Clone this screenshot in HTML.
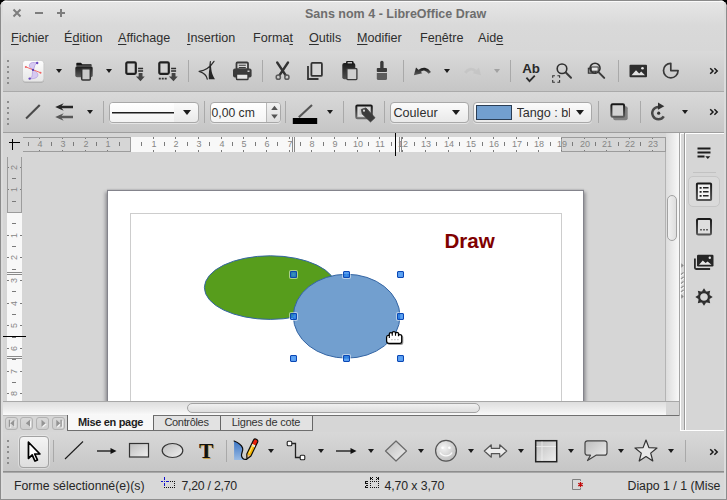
<!DOCTYPE html>
<html><head><meta charset="utf-8"><title>Sans nom 4 - LibreOffice Draw</title>
<style>
html,body{margin:0;padding:0;background:#000;}
body{width:727px;height:500px;position:relative;overflow:hidden;font-family:"Liberation Sans",sans-serif;font-size:13px;color:#333;}
.a{position:absolute}
#win{left:0;top:0;width:727px;height:500px;background:#d6d6d6;border-radius:8px 8px 0 0;overflow:hidden}
#title{left:0;top:0;width:727px;height:51px;background:linear-gradient(#e9e9e9 0,#e5e5e5 3px,#d9d9d9 26px,#d7d7d7 51px)}
#ttext{left:305px;top:7px;white-space:nowrap;font-weight:bold;font-size:12.5px;color:#6e6e6e}
.mi{top:31px;font-size:12.6px;color:#2e2e2e;white-space:nowrap}
.mi u{text-decoration:underline;text-underline-offset:2px}
#tb1{left:3px;top:51px;width:721px;height:40px;background:linear-gradient(#d9d9d9,#c6c6c6)}
#tb2{left:3px;top:92px;width:721px;height:40px;background:linear-gradient(#d9d9d9,#c6c6c6)}
.hl{height:1px;left:0;width:727px}
.dot{width:2px;height:2px;background:#8c8c8c;left:7px}
.sep{width:1px;background:#a9a9a9}
.dd{width:0;height:0;border-left:3.5px solid transparent;border-right:3.5px solid transparent;border-top:4px solid #1c1c1c}
#work{left:3px;top:133px;width:663px;height:268px;background:#d6d6d6;overflow:hidden}
.rn{font-size:9px;color:#868686;top:139px;width:20px;text-align:center;line-height:11px}
.vn{font-size:9px;color:#868686;left:4px;width:20px;height:11px;text-align:center;line-height:11px;transform:rotate(-90deg)}
.tk{background:#7a7a7a}
.hd{width:7px;height:7px;border-radius:1px;background:radial-gradient(circle,rgba(48,145,246,.78) 0,rgba(22,115,230,.7) 70%,rgba(14,95,210,.75) 100%);border:1px solid #0a48b6;box-shadow:0 0 0 1px rgba(255,255,255,.5);box-sizing:border-box}
.tab{top:416px;height:14px;font-size:11px;letter-spacing:-.33px;line-height:13px;text-align:center;white-space:nowrap;box-sizing:border-box}
.st{top:479px;font-size:12.300px;color:#262626;white-space:nowrap}
</style></head><body>
<div id="win" class="a">

<!-- title + menu -->
<div id="title" class="a"></div>
<div class="a hl" style="top:0;background:#8a8a8a"></div>
<div class="a hl" style="top:1px;background:#fafafa"></div>
<div id="ttext" class="a"><span id="tspan">Sans nom 4 - LibreOffice Draw</span></div>


<!-- window buttons -->
<svg class="a" style="left:12px;top:8px" width="56" height="10" viewBox="0 0 56 10"><g stroke="#7d7d7d" stroke-width="2" fill="none"><path d="M1.5 1.5l7 7M8.5 1.5l-7 7"/><path d="M23 5h8"/><path d="M45 5h8M49 1v8"/></g></svg>
<!-- menu -->
<div class="a mi" id="m1" style="left:11px"><u>F</u>ichier</div>
<div class="a mi" id="m2" style="left:64px">É<u>d</u>ition</div>
<div class="a mi" id="m3" style="left:118px"><u>A</u>ffichage</div>
<div class="a mi" id="m4" style="left:187px"><u>I</u>nsertion</div>
<div class="a mi" id="m5" style="left:253px">Forma<u>t</u></div>
<div class="a mi" id="m6" style="left:309px"><u>O</u>utils</div>
<div class="a mi" id="m7" style="left:357px"><u>M</u>odifier</div>
<div class="a mi" id="m8" style="left:420px">Fe<u>n</u>être</div>
<div class="a mi" id="m9" style="left:478px">Aid<u>e</u></div>

<!-- toolbars -->
<div id="tb1" class="a"></div>
<div class="a hl" style="top:91px;background:#aaa"></div>
<div id="tb2" class="a"></div>
<div class="a hl" style="top:132px;background:#9e9e9e"></div>


<!-- TB1 content -->
<div id="tb1c" class="a" style="left:0;top:0;width:727px;height:132px">
<div class="a dot" style="top:60px"></div><div class="a dot" style="top:65.5px"></div><div class="a dot" style="top:71px"></div><div class="a dot" style="top:76.5px"></div><div class="a dot" style="top:82px"></div>
<div class="a dot" style="top:101px"></div><div class="a dot" style="top:106.5px"></div><div class="a dot" style="top:112px"></div><div class="a dot" style="top:117.5px"></div><div class="a dot" style="top:123px"></div>
<!-- draw doc icon -->
<svg class="a" style="left:22px;top:60px" width="23" height="24" viewBox="0 0 23 24">
<defs><linearGradient id="gS" x1="0" y1="0" x2="0" y2="1"><stop offset="0" stop-color="#fdfdfd"/><stop offset="1" stop-color="#e6e6e6"/></linearGradient></defs>
<rect x="0.600" y="1.200" width="21.400" height="21.600" rx="3" fill="#9c9c9c" opacity=".7"/>
<rect x="0.500" y="0.400" width="21.400" height="21.300" rx="3" fill="url(#gS)" stroke="#c6c6c6" stroke-width=".7"/>
<path d="M11 9.900C8.500 8.500 6.800 6.500 7.500 4.500C8.200 2.300 12 2 15.200 3C13.500 3.800 12.600 5.500 12.400 7C12.300 8.200 11.600 9.200 11 9.900ZM11 9.900C13.500 11 16.200 13 15.800 15.500C15.300 18.300 11 19 7.700 18.600C9.500 17.800 10.300 16 10.300 14.500C10.300 12.500 10.600 11 11 9.900Z" fill="#d6c9f1" stroke="#b4a0e0" stroke-width=".8"/>
<path d="M3.800 6.900L18.500 12.700" stroke="#f26a6a" stroke-width="1"/>
<circle cx="3.800" cy="6.900" r="1" fill="#f06464"/><circle cx="18.500" cy="12.700" r="1" fill="#f06464"/>
<circle cx="11" cy="9.900" r="1.150" fill="#5a3cae"/><circle cx="15.200" cy="3" r="1.200" fill="#6a48c0"/><circle cx="7.700" cy="18.600" r="1.200" fill="#6a48c0"/>
</svg>
<div class="a dd" style="left:55.500px;top:69px"></div>
<!-- open -->
<svg class="a" style="left:74px;top:61px" width="21" height="21" viewBox="0 0 21 21">
<defs><linearGradient id="gF" x1="0" y1="0" x2="0" y2="1"><stop offset="0" stop-color="#1a1a1a"/><stop offset="1" stop-color="#5e5e5e"/></linearGradient></defs>
<path d="M2.300 4.800V2.500a.8.800 0 0 1 .8-.8h3.900l1.300 1.600h8.600a.8.800 0 0 1 .8.800v.7z" fill="#141414"/>
<rect x="1.300" y="5.300" width="17.400" height="11" rx="1.800" fill="url(#gF)"/>
<rect x="7.700" y="7.700" width="8.600" height="11.300" rx="1" fill="#cacaca" stroke="#333" stroke-width="1.500"/>
</svg>
<div class="a dd" style="left:105.500px;top:69px"></div>
<!-- export 1 -->
<svg class="a" style="left:124px;top:60px" width="22" height="23" viewBox="0 0 22 23">
<rect x="2.300" y="2.300" width="9.500" height="11.600" rx="1.300" fill="#d2d2d2" stroke="#202020" stroke-width="2.200"/>
<path d="M14.100 8.400h5M14.100 10.950h5" stroke="#2e2e2e" stroke-width="1.500"/>
<path d="M14.650 13h3.850v3.450h2.200l-4.200 4.700-4.600-4.700h2.750z" fill="#444"/>
</svg>
<!-- export 2 -->
<svg class="a" style="left:157px;top:60px" width="22" height="23" viewBox="0 0 22 23">
<rect x="2.300" y="2.300" width="9.500" height="11.600" rx="1.300" fill="#d2d2d2" stroke="#202020" stroke-width="2.200"/>
<path d="M14.100 8.400h5M14.100 10.950h5" stroke="#2e2e2e" stroke-width="1.500"/>
<path d="M14.650 13h3.850v3.450h2.200l-4.200 4.700-4.600-4.700h2.750z" fill="#444"/>
<path d="M1.800 18.650h2M4.750 18.650h2M7.700 18.650h2" stroke="#333" stroke-width="1.700"/>
</svg>
<div class="a sep" style="left:188px;top:60px;height:22px"></div>
<!-- pdf / curve -->
<svg class="a" style="left:198px;top:60px" width="20" height="22" viewBox="0 0 20 22">
<path d="M1.120 11.350Q10.460 10.030 16 1.360M1.120 11.350Q8.500 13.700 9.280 19.100M12.400 1.600L11.700 7.600" fill="none" stroke="#2e2e2e" stroke-width="1.200" stroke-linecap="round"/>
<path d="M12.300 3.300C11.500 8 10.400 13 10.870 19.300L16.960 19.300C13.200 13 13.400 9 12.980 5.680Z" fill="#262626"/>
</svg>
<!-- printer -->
<svg class="a" style="left:232px;top:61px" width="21" height="20" viewBox="0 0 21 20">
<rect x="4.500" y="1.500" width="11.500" height="7" rx="1" fill="#d8d8d8" stroke="#3a3a3a" stroke-width="1.800"/>
<path d="M6.800 4.300h7M6.800 6.500h7" stroke="#3a3a3a" stroke-width="1.100"/>
<rect x="1" y="7.500" width="18.600" height="9" rx="2" fill="#3c3c3c"/>
<rect x="4.500" y="13" width="11.500" height="5.500" rx=".8" fill="#e6e6e6" stroke="#3a3a3a" stroke-width="1.400"/>
<rect x="15.500" y="9.500" width="2" height="1.500" fill="#ccc"/>
</svg>
<div class="a sep" style="left:262px;top:60px;height:22px"></div>
<!-- scissors -->
<svg class="a" style="left:274px;top:61px" width="18" height="20" viewBox="0 0 18 20">
<path d="M3.200 1.500L11.500 14M14 1.500L5.700 14" stroke="#333" stroke-width="2.300" stroke-linecap="round"/>
<circle cx="4.300" cy="16.200" r="2.100" fill="none" stroke="#5a5a5a" stroke-width="1.500"/><circle cx="12.900" cy="16.200" r="2.100" fill="none" stroke="#5a5a5a" stroke-width="1.500"/>
</svg>
<!-- copy -->
<svg class="a" style="left:306px;top:61px" width="19" height="20" viewBox="0 0 19 20">
<path d="M2 5v13h10.500" fill="none" stroke="#333" stroke-width="1.800"/>
<rect x="5.400" y="1.900" width="10.500" height="13" rx="1" fill="#d6d6d6" stroke="#333" stroke-width="1.800"/>
</svg>
<!-- paste -->
<svg class="a" style="left:340px;top:60px" width="19" height="22" viewBox="0 0 19 22">
<defs><linearGradient id="gPa" x1="0" y1="0" x2="0" y2="1"><stop offset="0" stop-color="#1c1c1c"/><stop offset="1" stop-color="#505050"/></linearGradient></defs>
<rect x="2.300" y="3" width="13" height="16.300" rx="2" fill="url(#gPa)"/>
<rect x="6" y="1" width="7.600" height="3.800" rx="1.300" fill="#1c1c1c"/>
<rect x="7.600" y="2.100" width="4.400" height="1.300" fill="#d6d6d6"/>
<rect x="6.900" y="8.700" width="10" height="10.900" rx=".8" fill="#d0d0d0" stroke="#3a3a3a" stroke-width="1.300"/>
</svg>
<!-- brush -->
<svg class="a" style="left:375px;top:60px" width="14" height="21" viewBox="0 0 14 21">
<rect x="5.200" y=".8" width="3.400" height="8" rx="1.600" fill="#3a3a3a"/>
<rect x="1.800" y="8" width="10.200" height="4" rx=".8" fill="#3a3a3a"/>
<path d="M1.800 13h10.200v5.500a1.500 1.500 0 0 1-1.500 1.500h-7.200a1.500 1.500 0 0 1-1.500-1.500z" fill="#5c5c5c"/>
</svg>
<div class="a sep" style="left:403px;top:60px;height:22px"></div>
<!-- undo -->
<svg class="a" style="left:413px;top:66px" width="19" height="11" viewBox="0 0 19 11">
<defs><linearGradient id="gU" x1="0" y1="0" x2="0" y2="1"><stop offset="0" stop-color="#1e1e1e"/><stop offset="1" stop-color="#5a5a5a"/></linearGradient></defs>
<path d="M6.300 5.200Q12 .400 16.800 6.900" fill="none" stroke="url(#gU)" stroke-width="2.900"/>
<path d="M.900 9.300L3 1.500L9.300 7.200z" fill="url(#gU)"/>
</svg>
<div class="a dd" style="left:443.500px;top:69px"></div>
<!-- redo disabled -->
<svg class="a" style="left:463px;top:66px;opacity:.07" width="19" height="11" viewBox="0 0 19 11">
<path d="M12.700 5.200Q7 .400 2.200 6.900" fill="none" stroke="#555" stroke-width="2.900"/>
<path d="M18.100 9.300L16 1.500L9.700 7.200z" fill="#555"/>
</svg>
<div class="a dd" style="left:493.500px;top:69px;border-top-color:#a2a2a2"></div>
<div class="a sep" style="left:510px;top:60px;height:22px"></div>
<!-- spell Ab -->
<svg class="a" style="left:520px;top:60px" width="22" height="24" viewBox="0 0 22 24">
<text x="2.200" y="12.500" font-family="Liberation Sans, sans-serif" font-weight="bold" font-size="12.200" fill="#2a2a2a" textLength="17.800" lengthAdjust="spacingAndGlyphs">Ab</text>
<path d="M6.400 17.700l3.100 3.400 5.300-5.500" fill="none" stroke="#2e2e2e" stroke-width="1.800"/>
</svg>
<!-- zoom -->
<svg class="a" style="left:551px;top:62px" width="22" height="22" viewBox="0 0 22 22">
<circle cx="11" cy="6.750" r="4.800" fill="none" stroke="#303030" stroke-width="1.600"/>
<path d="M14.800 10.500l5.200 5.200" stroke="#3a3a3a" stroke-width="2" stroke-linecap="round"/>
<path d="M1.700 15.800v-2.100h2.200M6.400 13.700h2.200v2.100M8.600 18.100v2.100H6.400M3.900 20.200H1.700v-2.100" fill="none" stroke="#333" stroke-width="1.100"/>
</svg>
<!-- zoom 2 -->
<svg class="a" style="left:586px;top:62px" width="21" height="19" viewBox="0 0 21 19">
<rect x="2.300" y="6.200" width="7.500" height="5" fill="#8a8a8a" stroke="#2e2e2e" stroke-width="1"/>
<rect x="5.200" y="5" width="7" height="4.200" fill="#e8e8e8" stroke="#2e2e2e" stroke-width="1"/>
<circle cx="9.050" cy="6.200" r="5" fill="none" stroke="#303030" stroke-width="1.600"/>
<path d="M13 10.600l5.200 5.300" stroke="#3a3a3a" stroke-width="2" stroke-linecap="round"/>
</svg>
<div class="a sep" style="left:618px;top:60px;height:22px"></div>
<!-- image -->
<svg class="a" style="left:629px;top:64px" width="19" height="14" viewBox="0 0 19 14">
<rect x=".5" y=".8" width="17.500" height="12.400" rx="1" fill="#2e2e2e"/>
<path d="M2.500 11.200l4.500-5 3.200 3.200 2-1.800 3.800 3.600z" fill="#e2e2e2"/><circle cx="13.500" cy="4.200" r="1.300" fill="#e2e2e2"/>
</svg>
<!-- chart -->
<svg class="a" style="left:662px;top:62px" width="19" height="19" viewBox="0 0 19 19">
<path d="M8.800 1.300A7.300 7.300 0 1 0 16.100 8.600H8.800z" fill="none" stroke="#3a3a3a" stroke-width="1.700" stroke-linejoin="round"/>
</svg>
<svg class="a" style="left:709px;top:67px" width="10" height="8" viewBox="0 0 10 8"><path d="M1.200 1.300l2.800 2.700-2.800 2.700M5.400 1.300l2.800 2.700-2.800 2.700" fill="none" stroke="#1a1a1a" stroke-width="1.500"/></svg>
</div>


<!-- TB2 content -->
<style>
.cb{top:102px;height:21px;box-sizing:border-box;border:1px solid #a8a8a8;border-radius:4px;background:linear-gradient(#fbfbfb,#e9e9e9);box-shadow:0 1px 0 rgba(255,255,255,.5)}
.cbt{top:106px;font-size:12.600px;color:#2e2e2e;white-space:nowrap}
.dd2{width:0;height:0;border-left:4.500px solid transparent;border-right:4.500px solid transparent;border-top:5px solid #1c1c1c}
</style>
<svg class="a" style="left:24px;top:103px" width="18" height="18" viewBox="0 0 18 18"><path d="M2.100 15.500L15.750 1.900" stroke="#4a4a4a" stroke-width="2.100"/></svg>
<!-- arrow style -->
<svg class="a" style="left:54px;top:102px" width="22" height="20" viewBox="0 0 22 20">
<path d="M5 5h14" stroke="#262626" stroke-width="2.300"/><path d="M1.200 5l8.500-3.700-2.900 3.700 2.900 3.700z" fill="#262626"/>
<path d="M5 15h14" stroke="#585858" stroke-width="2.300"/><path d="M1.200 15l8.500-3.700-2.900 3.700 2.900 3.700z" fill="#585858"/>
</svg>
<div class="a dd" style="left:86.500px;top:110px"></div>
<div class="a sep" style="left:103px;top:101px;height:22px"></div>
<!-- line style combobox -->
<div class="a cb" style="left:109px;width:90px"></div>
<div class="a" style="left:110px;top:103px;width:64px;height:19px;background:linear-gradient(#fff,#f3f3f3);border-radius:3px 0 0 3px"></div><div class="a" style="left:112px;top:112px;width:62px;height:1px;background:#1e1e1e"></div><div class="a" style="left:112px;top:113px;width:62px;height:1px;background:#8a8a8a"></div>
<div class="a dd2" style="left:182.500px;top:110px"></div>
<div class="a sep" style="left:204px;top:101px;height:22px"></div>
<!-- width spin -->
<div class="a cb" style="left:210px;width:71px;background:linear-gradient(#fff,#f4f4f4)"></div>
<div class="a" style="left:266px;top:103px;width:14px;height:19px;background:linear-gradient(#f2f2f2,#dedede);border-left:1px solid #b8b8b8;border-radius:0 3px 3px 0;box-sizing:border-box"></div>
<div class="a cbt" id="w0" style="left:211.500px;font-size:12.200px">0,00 cm</div>
<svg class="a" style="left:270px;top:105px" width="9" height="15" viewBox="0 0 9 15"><path d="M1.200 5l3.300-4.200L7.800 5zM1.200 9.500l3.300 4.200L7.800 9.500z" fill="#555"/></svg>
<div class="a sep" style="left:285px;top:101px;height:22px"></div>
<!-- line color -->
<svg class="a" style="left:292px;top:103px" width="26" height="22" viewBox="0 0 26 22"><path d="M6.800 14.300L20 1.900" stroke="#555" stroke-width="2.100"/><rect x=".8" y="15" width="24.400" height="6" fill="#000"/></svg>
<div class="a dd" style="left:326.500px;top:110px"></div>
<div class="a sep" style="left:343px;top:101px;height:22px"></div>
<!-- area icon -->
<svg class="a" style="left:354px;top:103px" width="23" height="20" viewBox="0 0 23 20">
<defs><linearGradient id="gA" x1="0" y1="0" x2="0" y2="1"><stop offset="0" stop-color="#161616"/><stop offset="1" stop-color="#6a6a6a"/></linearGradient></defs>
<rect x="2.300" y="2.400" width="15.500" height="12.800" rx="1" fill="#c8c8c8" stroke="url(#gA)" stroke-width="2"/>
<rect x="4.800" y="4.900" width="10.500" height="7.800" fill="none" stroke="#e2e2e2" stroke-width="1"/>
<path d="M7.400 6.400L11.900 4.900L21 14.700L16.500 18.900L8.150 10.900z" fill="#3c3c3c" stroke="#3c3c3c" stroke-width=".8" stroke-linejoin="round"/>
<circle cx="10" cy="7.700" r="1.100" fill="#d8d8d8"/>
</svg>
<div class="a sep" style="left:384px;top:101px;height:22px"></div>
<!-- Couleur combobox -->
<div class="a cb" style="left:390px;width:79px"></div>
<div class="a cbt" id="w1" style="left:393.500px">Couleur</div>
<div class="a dd2" style="left:452px;top:110px"></div>
<!-- color combobox -->
<div class="a cb" style="left:473px;width:119px"></div>
<div class="a" style="left:476px;top:105px;width:36px;height:15px;box-sizing:border-box;background:#729fcf;border:1px solid #2b3e55"></div>
<div class="a cbt" id="w2" style="left:516.500px;width:53px;overflow:hidden">Tango : bleu</div>
<div class="a dd2" style="left:575.500px;top:110px"></div>
<div class="a sep" style="left:598px;top:101px;height:22px"></div>
<!-- shadow -->
<svg class="a" style="left:608px;top:101px" width="21" height="21" viewBox="0 0 21 21">
<defs><linearGradient id="gSh" x1="0" y1="0" x2="0" y2="1"><stop offset="0" stop-color="#161616"/><stop offset="1" stop-color="#5a5a5a"/></linearGradient></defs>
<rect x="5.200" y="5.200" width="14.500" height="14" rx="2" fill="#808080"/>
<rect x="3.400" y="3.200" width="12.700" height="12.600" rx="1.200" fill="#d2d2d2" stroke="url(#gSh)" stroke-width="2"/>
</svg>
<div class="a sep" style="left:640px;top:101px;height:22px"></div>
<!-- rotate -->
<svg class="a" style="left:650px;top:101px" width="18" height="22" viewBox="0 0 18 22">
<path d="M8.500 5.900A6.200 6.200 0 1 0 13.760 15.390" fill="none" stroke="#484848" stroke-width="2.500"/>
<path d="M8 1.400l6.300 3.900L8 8.800z" fill="#333"/>
<circle cx="8.700" cy="12.200" r="1.600" fill="#333"/>
</svg>
<div class="a dd" style="left:681.500px;top:110px"></div>
<svg class="a" style="left:709px;top:108px" width="10" height="8" viewBox="0 0 10 8"><path d="M1.200 1.300l2.800 2.700-2.800 2.700M5.400 1.300l2.800 2.700-2.800 2.700" fill="none" stroke="#1a1a1a" stroke-width="1.500"/></svg>

<!-- workspace -->
<div id="work" class="a"></div>

<!-- WORK content -->
<div class="a" style="left:23px;top:137px;width:108px;height:15px;background:#d6d6d6;border:1px solid #9c9c9c;border-left:0;box-sizing:border-box"></div>
<div class="a" style="left:131px;top:137px;width:430px;height:15px;background:#f8f8f8"></div>
<div class="a" style="left:561px;top:137px;width:105px;height:15px;background:#d6d6d6;border:1px solid #9c9c9c;box-sizing:border-box"></div>
<div class="a tk" style="left:28px;top:142px;width:1px;height:4px"></div>
<div class="a rn" style="left:30px">4</div>
<div class="a tk" style="left:39px;top:138px;width:1px;height:1px"></div><div class="a tk" style="left:39px;top:150px;width:1px;height:1px"></div>
<div class="a tk" style="left:51px;top:142px;width:1px;height:4px"></div>
<div class="a rn" style="left:53px">3</div>
<div class="a tk" style="left:62px;top:138px;width:1px;height:1px"></div><div class="a tk" style="left:62px;top:150px;width:1px;height:1px"></div>
<div class="a tk" style="left:73px;top:142px;width:1px;height:4px"></div>
<div class="a rn" style="left:76px">2</div>
<div class="a tk" style="left:85px;top:138px;width:1px;height:1px"></div><div class="a tk" style="left:85px;top:150px;width:1px;height:1px"></div>
<div class="a tk" style="left:96px;top:142px;width:1px;height:4px"></div>
<div class="a rn" style="left:98px">1</div>
<div class="a tk" style="left:107px;top:138px;width:1px;height:1px"></div><div class="a tk" style="left:107px;top:150px;width:1px;height:1px"></div>
<div class="a tk" style="left:119px;top:142px;width:1px;height:4px"></div>
<div class="a tk" style="left:141px;top:142px;width:1px;height:4px"></div>
<div class="a rn" style="left:144px">1</div>
<div class="a tk" style="left:153px;top:137px;width:1px;height:2px"></div><div class="a tk" style="left:153px;top:150px;width:1px;height:2px"></div>
<div class="a tk" style="left:164px;top:142px;width:1px;height:4px"></div>
<div class="a rn" style="left:166px">2</div>
<div class="a tk" style="left:175px;top:137px;width:1px;height:2px"></div><div class="a tk" style="left:175px;top:150px;width:1px;height:2px"></div>
<div class="a tk" style="left:187px;top:142px;width:1px;height:4px"></div>
<div class="a rn" style="left:189px">3</div>
<div class="a tk" style="left:198px;top:137px;width:1px;height:2px"></div><div class="a tk" style="left:198px;top:150px;width:1px;height:2px"></div>
<div class="a tk" style="left:209px;top:142px;width:1px;height:4px"></div>
<div class="a rn" style="left:212px">4</div>
<div class="a tk" style="left:221px;top:137px;width:1px;height:2px"></div><div class="a tk" style="left:221px;top:150px;width:1px;height:2px"></div>
<div class="a tk" style="left:232px;top:142px;width:1px;height:4px"></div>
<div class="a rn" style="left:234px">5</div>
<div class="a tk" style="left:243px;top:137px;width:1px;height:2px"></div><div class="a tk" style="left:243px;top:150px;width:1px;height:2px"></div>
<div class="a tk" style="left:255px;top:142px;width:1px;height:4px"></div>
<div class="a rn" style="left:257px">6</div>
<div class="a tk" style="left:266px;top:137px;width:1px;height:2px"></div><div class="a tk" style="left:266px;top:150px;width:1px;height:2px"></div>
<div class="a tk" style="left:277px;top:142px;width:1px;height:4px"></div>
<div class="a rn" style="left:280px">7</div>
<div class="a tk" style="left:289px;top:137px;width:1px;height:2px"></div><div class="a tk" style="left:289px;top:150px;width:1px;height:2px"></div>
<div class="a tk" style="left:300px;top:142px;width:1px;height:4px"></div>
<div class="a rn" style="left:302px">8</div>
<div class="a tk" style="left:311px;top:137px;width:1px;height:2px"></div><div class="a tk" style="left:311px;top:150px;width:1px;height:2px"></div>
<div class="a tk" style="left:323px;top:142px;width:1px;height:4px"></div>
<div class="a rn" style="left:325px">9</div>
<div class="a tk" style="left:334px;top:137px;width:1px;height:2px"></div><div class="a tk" style="left:334px;top:150px;width:1px;height:2px"></div>
<div class="a tk" style="left:345px;top:142px;width:1px;height:4px"></div>
<div class="a rn" style="left:348px">10</div>
<div class="a tk" style="left:357px;top:137px;width:1px;height:2px"></div><div class="a tk" style="left:357px;top:150px;width:1px;height:2px"></div>
<div class="a tk" style="left:368px;top:142px;width:1px;height:4px"></div>
<div class="a rn" style="left:370px">11</div>
<div class="a tk" style="left:379px;top:137px;width:1px;height:2px"></div><div class="a tk" style="left:379px;top:150px;width:1px;height:2px"></div>
<div class="a tk" style="left:391px;top:142px;width:1px;height:4px"></div>
<div class="a rn" style="left:393px">12</div>
<div class="a tk" style="left:402px;top:137px;width:1px;height:2px"></div><div class="a tk" style="left:402px;top:150px;width:1px;height:2px"></div>
<div class="a tk" style="left:414px;top:142px;width:1px;height:4px"></div>
<div class="a rn" style="left:416px">13</div>
<div class="a tk" style="left:425px;top:137px;width:1px;height:2px"></div><div class="a tk" style="left:425px;top:150px;width:1px;height:2px"></div>
<div class="a tk" style="left:436px;top:142px;width:1px;height:4px"></div>
<div class="a rn" style="left:439px">14</div>
<div class="a tk" style="left:448px;top:137px;width:1px;height:2px"></div><div class="a tk" style="left:448px;top:150px;width:1px;height:2px"></div>
<div class="a tk" style="left:459px;top:142px;width:1px;height:4px"></div>
<div class="a rn" style="left:461px">15</div>
<div class="a tk" style="left:470px;top:137px;width:1px;height:2px"></div><div class="a tk" style="left:470px;top:150px;width:1px;height:2px"></div>
<div class="a tk" style="left:482px;top:142px;width:1px;height:4px"></div>
<div class="a rn" style="left:484px">16</div>
<div class="a tk" style="left:493px;top:137px;width:1px;height:2px"></div><div class="a tk" style="left:493px;top:150px;width:1px;height:2px"></div>
<div class="a tk" style="left:504px;top:142px;width:1px;height:4px"></div>
<div class="a rn" style="left:507px">17</div>
<div class="a tk" style="left:516px;top:137px;width:1px;height:2px"></div><div class="a tk" style="left:516px;top:150px;width:1px;height:2px"></div>
<div class="a tk" style="left:527px;top:142px;width:1px;height:4px"></div>
<div class="a rn" style="left:529px">18</div>
<div class="a tk" style="left:538px;top:137px;width:1px;height:2px"></div><div class="a tk" style="left:538px;top:150px;width:1px;height:2px"></div>
<div class="a tk" style="left:550px;top:142px;width:1px;height:4px"></div>
<div class="a rn" style="left:552px">19</div>
<div class="a tk" style="left:561px;top:138px;width:1px;height:1px"></div><div class="a tk" style="left:561px;top:150px;width:1px;height:1px"></div>
<div class="a tk" style="left:572px;top:142px;width:1px;height:4px"></div>
<div class="a rn" style="left:575px">20</div>
<div class="a tk" style="left:584px;top:138px;width:1px;height:1px"></div><div class="a tk" style="left:584px;top:150px;width:1px;height:1px"></div>
<div class="a tk" style="left:595px;top:142px;width:1px;height:4px"></div>
<div class="a rn" style="left:597px">21</div>
<div class="a tk" style="left:606px;top:138px;width:1px;height:1px"></div><div class="a tk" style="left:606px;top:150px;width:1px;height:1px"></div>
<div class="a tk" style="left:618px;top:142px;width:1px;height:4px"></div>
<div class="a rn" style="left:620px">22</div>
<div class="a tk" style="left:629px;top:138px;width:1px;height:1px"></div><div class="a tk" style="left:629px;top:150px;width:1px;height:1px"></div>
<div class="a tk" style="left:640px;top:142px;width:1px;height:4px"></div>
<div class="a rn" style="left:643px">23</div>
<div class="a tk" style="left:652px;top:138px;width:1px;height:1px"></div><div class="a tk" style="left:652px;top:150px;width:1px;height:1px"></div>
<div class="a" style="left:292px;top:137px;width:1px;height:15px;background:#8a8a8a"></div>
<div class="a" style="left:294px;top:137px;width:1px;height:15px;background:#8a8a8a"></div>
<div class="a" style="left:399px;top:137px;width:1px;height:15px;background:#8a8a8a"></div>
<div class="a" style="left:401px;top:137px;width:1px;height:15px;background:#8a8a8a"></div>
<div class="a" style="left:395px;top:133px;width:1px;height:23px;background:#000"></div>
<div class="a" style="left:9px;top:142px;width:11px;height:1px;background:#000"></div><div class="a" style="left:12px;top:139px;width:1px;height:11px;background:#000"></div>
<div class="a" style="left:7px;top:157px;width:15px;height:56px;background:#d6d6d6;border:1px solid #9c9c9c;border-top:0;box-sizing:border-box"></div>
<div class="a" style="left:7px;top:213px;width:15px;height:188px;background:#f8f8f8"></div>
<div class="a vn" style="top:162px">2</div>
<div class="a tk" style="left:8px;top:167px;width:1px;height:1px"></div><div class="a tk" style="left:20px;top:167px;width:1px;height:1px"></div>
<div class="a tk" style="left:12px;top:178px;width:4px;height:1px"></div>
<div class="a vn" style="top:184px">1</div>
<div class="a tk" style="left:8px;top:189px;width:1px;height:1px"></div><div class="a tk" style="left:20px;top:189px;width:1px;height:1px"></div>
<div class="a tk" style="left:12px;top:201px;width:4px;height:1px"></div>
<div class="a tk" style="left:12px;top:223px;width:4px;height:1px"></div>
<div class="a vn" style="top:230px">1</div>
<div class="a tk" style="left:7px;top:235px;width:2px;height:1px"></div><div class="a tk" style="left:20px;top:235px;width:2px;height:1px"></div>
<div class="a tk" style="left:12px;top:246px;width:4px;height:1px"></div>
<div class="a vn" style="top:252px">2</div>
<div class="a tk" style="left:7px;top:257px;width:2px;height:1px"></div><div class="a tk" style="left:20px;top:257px;width:2px;height:1px"></div>
<div class="a tk" style="left:12px;top:269px;width:4px;height:1px"></div>
<div class="a vn" style="top:275px">3</div>
<div class="a tk" style="left:7px;top:280px;width:2px;height:1px"></div><div class="a tk" style="left:20px;top:280px;width:2px;height:1px"></div>
<div class="a tk" style="left:12px;top:291px;width:4px;height:1px"></div>
<div class="a vn" style="top:298px">4</div>
<div class="a tk" style="left:7px;top:303px;width:2px;height:1px"></div><div class="a tk" style="left:20px;top:303px;width:2px;height:1px"></div>
<div class="a tk" style="left:12px;top:314px;width:4px;height:1px"></div>
<div class="a vn" style="top:320px">5</div>
<div class="a tk" style="left:7px;top:325px;width:2px;height:1px"></div><div class="a tk" style="left:20px;top:325px;width:2px;height:1px"></div>
<div class="a tk" style="left:12px;top:337px;width:4px;height:1px"></div>
<div class="a vn" style="top:343px">6</div>
<div class="a tk" style="left:7px;top:348px;width:2px;height:1px"></div><div class="a tk" style="left:20px;top:348px;width:2px;height:1px"></div>
<div class="a tk" style="left:12px;top:359px;width:4px;height:1px"></div>
<div class="a vn" style="top:366px">7</div>
<div class="a tk" style="left:7px;top:371px;width:2px;height:1px"></div><div class="a tk" style="left:20px;top:371px;width:2px;height:1px"></div>
<div class="a tk" style="left:12px;top:382px;width:4px;height:1px"></div>
<div class="a vn" style="top:388px">8</div>
<div class="a tk" style="left:7px;top:393px;width:2px;height:1px"></div><div class="a tk" style="left:20px;top:393px;width:2px;height:1px"></div>
<div class="a" style="left:7px;top:272px;width:15px;height:1px;background:#8a8a8a"></div>
<div class="a" style="left:7px;top:274px;width:15px;height:1px;background:#8a8a8a"></div>
<div class="a" style="left:7px;top:356px;width:15px;height:1px;background:#8a8a8a"></div>
<div class="a" style="left:7px;top:358px;width:15px;height:1px;background:#8a8a8a"></div>
<div class="a" style="left:3px;top:336px;width:23px;height:1px;background:#000"></div>
<div class="a" style="left:107px;top:190px;width:477px;height:215px;background:#fff;border:1px solid #84848c;border-bottom:0;box-sizing:border-box;box-shadow:-2px 2px 3px rgba(60,60,70,.38),2px 2px 3px rgba(60,60,70,.38),0 -1px 1px rgba(60,60,70,.12)"></div>
<div class="a" style="left:130px;top:213px;width:432px;height:200px;border:1px solid #cdcdcd;box-sizing:border-box"></div>
<svg class="a" style="left:190px;top:220px" width="330" height="160" viewBox="190 220 330 160">
<ellipse cx="270.300" cy="287.600" rx="65.900" ry="31.800" fill="#579d1c" stroke="#3465a4" stroke-width="1"/>
<ellipse cx="346.650" cy="316.200" rx="53.300" ry="41.950" fill="#729fcf" stroke="#3465a4" stroke-width="1"/>
<text x="444.500" y="247.500" font-family="Liberation Sans, sans-serif" font-weight="bold" font-size="19.600" fill="#800000" id="drawtxt" textLength="50.300" lengthAdjust="spacingAndGlyphs">Draw</text>
</svg>
<div class="a hd" style="left:290.0px;top:271.0px"></div>
<div class="a hd" style="left:290.0px;top:313.0px"></div>
<div class="a hd" style="left:290.0px;top:355.0px"></div>
<div class="a hd" style="left:343px;top:271px"></div>
<div class="a hd" style="left:343px;top:355px"></div>
<div class="a hd" style="left:397.0px;top:271.0px"></div>
<div class="a hd" style="left:397.0px;top:313.0px"></div>
<div class="a hd" style="left:397.0px;top:355.0px"></div>
<svg class="a" style="left:386px;top:331px;overflow:visible" width="18" height="15" viewBox="0 0 18 15">
<path d="M0.600 6.200Q0.600 4.300 2.200 4.300L3.300 4.300L3.300 3Q3.300 1.500 4.800 1.500Q6.250 1.500 6.250 2.600L6.250 1.700Q6.250 .500 7.900 .500Q9.500 .500 9.500 1.800L9.500 2.400Q9.500 1.300 11 1.300Q12.500 1.300 12.500 2.800L12.500 4.400Q12.500 3.500 14 3.500Q15.700 3.500 15.700 5.200L15.700 10.500Q15.700 12.400 13.700 12.400L2.800 12.400Q.600 12.400 .600 10Z" fill="#fff" stroke="#000" stroke-width="1.250" stroke-linejoin="round" filter="drop-shadow(1px 1px .7px rgba(0,0,0,.4))"/>
<path d="M3.300 4.300V7M6.250 2.600V4.800M9.500 2.400V4.800M12.500 4.400V5.200" stroke="#000" stroke-width="1.100" fill="none"/>
<path d="M5.300 8.700h1.200M8.300 8.700h1.200M11.300 8.700h1.200" stroke="#9a9a9a" stroke-width=".9"/>
</svg>
<div class="a" style="left:3px;top:401px;width:677px;height:1px;background:#a8a8a8"></div>
<div class="a" style="left:3px;top:402px;width:663px;height:13px;background:linear-gradient(#dedede,#f0f0f0 70%,#fafafa)"></div>
<div class="a" style="left:3px;top:415px;width:64px;height:1px;background:#bcbcbc"></div><div class="a" style="left:153px;top:415px;width:527px;height:1px;background:#707070"></div>
<div class="a" style="left:187px;top:403px;width:293px;height:10px;box-sizing:border-box;border:1px solid #a2a2a2;border-radius:5px;background:linear-gradient(#f0f0f0,#dedede)"></div>
<div class="a" style="left:666px;top:133px;width:13px;height:268px;background:linear-gradient(90deg,#dcdcdc,#f8f8f8)"></div>
<div class="a" style="left:666px;top:402px;width:13px;height:13px;background:#d6d6d6"></div>
<div class="a" style="left:667px;top:195px;width:10px;height:46px;box-sizing:border-box;border:1px solid #a2a2a2;border-radius:5px;background:linear-gradient(90deg,#f0f0f0,#dedede)"></div>
<div class="a" style="left:679px;top:133px;width:1px;height:283px;background:#a4a4a4"></div>
<div class="a" style="left:680px;top:133px;width:4px;height:297px;background:#d8d8d8;border-left:1px solid #fff;border-top:1px solid #fff;box-sizing:border-box"></div>
<div class="a" style="left:684px;top:133px;width:1px;height:297px;background:#9a9a9a"></div>
<div class="a" style="left:685px;top:133px;width:39px;height:297px;background:#d6d6d6;border-left:1px solid #fff;border-top:1px solid #fff;box-sizing:border-box"></div>
<div class="a" style="left:680px;top:430px;width:44px;height:1px;background:#fff"></div>


<!-- SIDEBAR icons -->
<svg class="a" style="left:697px;top:147px" width="15" height="15" viewBox="0 0 15 15"><path d="M.5 1.600h13M.5 5.600h13M.5 9.600h7" stroke="#1c1c1c" stroke-width="2"/><path d="M8.300 9.300h5l-2.500 2.800z" fill="#1c1c1c"/></svg>
<div class="a" style="left:693px;top:172px;width:23px;height:1px;background:#c2c2c2"></div>
<div class="a" style="left:688px;top:176px;width:32px;height:31px;box-sizing:border-box;border:1px solid #c6c6c6;border-radius:5px;background:#dadada"></div>
<svg class="a" style="left:695px;top:182px" width="18" height="20" viewBox="0 0 18 20">
<defs><linearGradient id="gP" x1="0" y1="0" x2="0" y2="1"><stop offset="0" stop-color="#1a1a1a"/><stop offset="1" stop-color="#555"/></linearGradient></defs>
<rect x="1.900" y="1.500" width="14.200" height="16.600" rx=".8" fill="#f2f2f2" stroke="url(#gP)" stroke-width="2"/>
<path d="M4.600 5.800h2M4.600 9.800h2M4.600 13.800h2" stroke="#222" stroke-width="1.800"/><path d="M8 5.800h5.600M8 9.800h5.600M8 13.800h5.600" stroke="#222" stroke-width="1.500"/>
</svg>
<svg class="a" style="left:695px;top:217px" width="18" height="19" viewBox="0 0 18 19">
<rect x="2" y="2" width="14" height="15.500" rx="1.500" fill="#dedede" stroke="url(#gP)" stroke-width="2"/>
<path d="M5.200 12.800h1.600M8.200 12.800h1.600M11.200 12.800h1.600" stroke="#444" stroke-width="1.400"/>
</svg>
<svg class="a" style="left:693px;top:253px" width="22" height="19" viewBox="0 0 22 19">
<path d="M1.900 5.500v9.300a1.200 1.200 0 0 0 1.200 1.200h14" fill="none" stroke="#2a2a2a" stroke-width="1.800"/>
<rect x="4" y="1.700" width="16.500" height="11.700" rx="1.200" fill="#262626"/>
<path d="M6 11.700l3.800-4.300 2.800 2.700 2-1.700 3.900 3.300z" fill="#e8e8e8"/><circle cx="16.800" cy="4.800" r="1.200" fill="#e8e8e8"/>
</svg>
<svg class="a" style="left:694px;top:287px" width="20" height="20" viewBox="-10 -10 20 20">
<g fill="#2e2e2e"><path d="M-2.300 -5.200L0 -8.700 2.300 -5.200z" transform="rotate(0)"/><path d="M-2.300 -5.200L0 -8.700 2.300 -5.200z" transform="rotate(45)"/><path d="M-2.300 -5.200L0 -8.700 2.300 -5.200z" transform="rotate(90)"/><path d="M-2.300 -5.200L0 -8.700 2.300 -5.200z" transform="rotate(135)"/><path d="M-2.300 -5.200L0 -8.700 2.300 -5.200z" transform="rotate(180)"/><path d="M-2.300 -5.200L0 -8.700 2.300 -5.200z" transform="rotate(225)"/><path d="M-2.300 -5.200L0 -8.700 2.300 -5.200z" transform="rotate(270)"/><path d="M-2.300 -5.200L0 -8.700 2.300 -5.200z" transform="rotate(315)"/></g>
<circle r="4.900" fill="none" stroke="#2e2e2e" stroke-width="2.100"/>
</svg>
<svg class="a" style="left:680px;top:262px" width="5" height="38" viewBox="0 0 5 38">
<path d="M1.200 1.200l2.600 2.300-2.600 2.300zM1.200 32.200l2.600 2.300-2.600 2.300z" fill="#8a8a8a"/>
<g stroke="#909090" stroke-width="1.200"><path d="M1 12.500l2.600-2M1 17l2.600-2M1 21.500l2.600-2M1 26l2.600-2M1 30l2.600-2"/></g>
<g stroke="#fff" stroke-width=".9"><path d="M1.200 13.800l2.600-2M1.200 18.300l2.600-2M1.200 22.800l2.600-2M1.200 27.300l2.600-2M1.200 31.300l2.600-2"/></g>
</svg>

<!-- status -->
<div class="a hl" style="top:471px;background:#8e8e8e"></div><div class="a hl" style="top:472px;background:#a8a8a8"></div>
<div class="a" style="left:0;top:473px;width:727px;height:26px;background:#d8d8d8"></div>


<div class="a" style="left:665px;top:152px;width:1px;height:249px;background:#b4b4b4"></div>
<!-- TABS -->
<style>
.nb{top:416.500px;width:13px;height:13px;box-sizing:border-box;border:1px solid #b2b2b2;border-radius:3px;background:linear-gradient(#d8d8d8,#cecece)}
</style>
<div class="a nb" style="left:4.500px"></div><div class="a nb" style="left:20.400px"></div><div class="a nb" style="left:36px"></div><div class="a nb" style="left:52px"></div>
<svg class="a" style="left:4px;top:417px" width="62" height="13" viewBox="0 0 62 13"><g fill="#949494" filter="drop-shadow(1px 1px 0 rgba(255,255,255,.8))">
<path d="M4.800 2.800h1.400v7H4.800zM10.300 2.800v7L6.300 6.300z"/><path d="M26 2.800v7l-4.200-3.500z"/><path d="M37.500 2.800v7l4.200-3.500z"/><path d="M52.300 2.800v7l4-3.500zM56.400 2.800h1.400v7h-1.400z"/></g></svg>
<div class="a" style="left:67px;top:430px;width:246px;height:1px;background:#6e6e6e"></div>
<div class="a tab" style="left:67px;top:415px;width:86px;height:15px;background:#f8f8f8;font-weight:bold;color:#1e1e1e;border-left:1px solid #666;line-height:15px;padding-top:0"><span id="t1">Mise en page</span></div>
<div class="a tab" style="left:153px;top:416px;width:68px;height:14px;background:#e2e2e2;border-left:1px solid #666;border-right:1px solid #666;color:#333"><span id="t2" style="position:relative;left:-.5px">Contrôles</span></div>
<div class="a tab" style="left:221px;top:416px;width:92px;height:14px;background:#e2e2e2;border-right:1px solid #666;color:#333"><span id="t3" style="position:relative;left:-.6px;letter-spacing:-.22px">Lignes de cote</span></div>
<!-- DRAW TOOLBAR -->
<div class="a" style="left:3px;top:432px;width:721px;height:39px;background:linear-gradient(#d8d8d8,#c6c6c6)"></div>
<div class="a dot" style="top:440px"></div><div class="a dot" style="top:445.500px"></div><div class="a dot" style="top:451px"></div><div class="a dot" style="top:456.500px"></div><div class="a dot" style="top:462px"></div>
<div class="a" style="left:18.500px;top:435.500px;width:30px;height:32px;box-sizing:border-box;border:1px solid #a2a2a2;border-radius:4px;background:linear-gradient(#f4f4f4,#dedede);box-shadow:0 0 0 1px rgba(255,255,255,.35)"></div>
<svg class="a" style="left:27px;top:440.600px;overflow:visible" width="14" height="22" viewBox="0 0 14 22"><path d="M1.500 1.200v16.200l3.700-3.500 2.700 6.100 2.500-1.100-2.700-5.900h5.200z" fill="#fff" stroke="#000" stroke-width="1.650" stroke-linejoin="round" filter="drop-shadow(.6px .8px .5px rgba(0,0,0,.35))"/></svg>
<div class="a sep" style="left:53px;top:440px;height:22px"></div>
<svg class="a" style="left:64px;top:440px" width="20" height="20" viewBox="0 0 20 20"><path d="M1 19L19 1.500" stroke="#1a1a1a" stroke-width="1.050"/></svg>
<svg class="a" style="left:96px;top:445.700px" width="22" height="10" viewBox="0 0 22 10"><path d="M1 5h15" stroke="#111" stroke-width="1.300"/><path d="M14.500 2l6 3-6 3z" fill="#111"/></svg>
<svg class="a" style="left:128px;top:442px" width="22" height="17" viewBox="0 0 22 17"><defs><linearGradient id="gR" x1="0" y1="0" x2="1" y2="1"><stop offset="0" stop-color="#bdbdbd"/><stop offset="1" stop-color="#f0f0f0"/></linearGradient></defs><rect x="1.500" y="1.500" width="19" height="13.500" fill="url(#gR)" stroke="#333" stroke-width="1.200"/></svg>
<svg class="a" style="left:161px;top:442px" width="23" height="17" viewBox="0 0 23 17"><ellipse cx="11.500" cy="8.500" rx="10.300" ry="7" fill="url(#gR)" stroke="#333" stroke-width="1.200"/></svg>
<div class="a" style="left:199px;top:438px;font-family:'Liberation Serif',serif;font-weight:bold;font-size:21.500px;color:#111;text-shadow:1px 1px 0 #c9a24a;line-height:26px">T</div>
<div class="a sep" style="left:226px;top:440px;height:22px"></div>
<!-- curve -->
<svg class="a" style="left:232px;top:438px" width="28" height="24" viewBox="0 0 28 24">
<defs><linearGradient id="gC" x1="0" y1="0" x2="0" y2="1"><stop offset="0" stop-color="#3a74c4"/><stop offset="1" stop-color="#9abbe4"/></linearGradient></defs>
<path d="M2.100 3.050C6 4.500 9.500 7 10.600 10C11.500 13 9 15.500 9.500 17.800C10 20 11.500 21.500 13.300 21.900L2.100 21.950z" fill="url(#gC)"/>
<path d="M2.100 3.050C6 4.500 9.500 7 10.600 10C11.500 13 9 15.500 9.500 17.800C10 20 11.800 21.800 14.600 21.300" fill="none" stroke="#0a0a0a" stroke-width="1.200" stroke-linecap="round"/>
<path d="M14.900 21L14.790 15.950L21.530 2Q22.500 .300 24.300 1.200Q26.400 2.200 25.670 4L18.930 17.950Z" fill="#f4b400"/>
<path d="M14.900 21L14.790 15.950L18.930 17.950Z" fill="#e2b888"/>
<path d="M18.920 7.400L23.060 9.400L23.930 7.600L19.790 5.600Z" fill="#ececec"/>
<path d="M19.790 5.600L23.930 7.600L25.670 4Q26.400 2.200 24.300 1.200Q22.500 .300 21.530 2Z" fill="#e8200c"/>
<path d="M16.900 15.500L21.300 6.400" stroke="#ffe070" stroke-width="1.100"/>
<path d="M14.900 21L14.790 15.950L21.530 2Q22.500 .300 24.300 1.200Q26.400 2.200 25.670 4L18.930 17.950Z" fill="none" stroke="#0a0a0a" stroke-width="1.150" stroke-linejoin="round"/>
</svg>
<div class="a dd" style="left:267.500px;top:448.500px"></div>
<!-- connector -->
<svg class="a" style="left:286px;top:440px" width="21" height="21" viewBox="0 0 21 21">
<path d="M3.500 3.500h6v14h7" fill="none" stroke="#222" stroke-width="1.300"/>
<rect x="1.200" y="1.200" width="4.600" height="4.600" rx="1" fill="#fff" stroke="#222" stroke-width="1.100"/><rect x="14.200" y="15.200" width="4.600" height="4.600" rx="1" fill="#fff" stroke="#222" stroke-width="1.100"/>
</svg>
<div class="a dd" style="left:317.500px;top:448.500px"></div>
<svg class="a" style="left:335px;top:445.700px" width="23" height="10" viewBox="0 0 23 10"><path d="M1 5h16" stroke="#111" stroke-width="1.300"/><path d="M15.500 2l6 3-6 3z" fill="#111"/></svg>
<div class="a dd" style="left:368px;top:448.500px"></div>
<!-- diamond -->
<svg class="a" style="left:384px;top:439px" width="24" height="24" viewBox="0 0 24 24"><path d="M12 2L22.500 12 12 22 1.500 12z" fill="url(#gR)" stroke="#6a6a6a" stroke-width="1.200" stroke-linejoin="round"/></svg>
<div class="a dd" style="left:418px;top:448.500px"></div>
<!-- smiley -->
<svg class="a" style="left:434px;top:439px" width="24" height="24" viewBox="0 0 24 24">
<defs><radialGradient id="gSm" cx=".4" cy=".35" r=".7"><stop offset="0" stop-color="#f4f4f4"/><stop offset="1" stop-color="#bcbcbc"/></radialGradient></defs>
<circle cx="12" cy="11.800" r="10.400" fill="url(#gSm)" stroke="#555" stroke-width="1.200"/>
<circle cx="8.600" cy="8.800" r="1.300" fill="#fff"/><circle cx="15.400" cy="8.800" r="1.300" fill="#fff"/>
<path d="M6 13.500c2.500 4.500 9.500 4.500 12 0" fill="none" stroke="#fafafa" stroke-width="1.400"/>
</svg>
<div class="a dd" style="left:467.500px;top:448.500px"></div>
<!-- double arrow -->
<svg class="a" style="left:482px;top:442px" width="27" height="18" viewBox="0 0 27 18"><path d="M2.300 9L9.300 2.800v3.500h8.400V2.800l7 6.200-7 6.200v-3.500H9.300v3.500z" fill="#ececec" stroke="#555" stroke-width="1.200" stroke-linejoin="round"/></svg>
<div class="a dd" style="left:517.500px;top:448.500px"></div>
<!-- table shape -->
<svg class="a" style="left:534px;top:439px" width="25" height="25" viewBox="0 0 25 25">
<rect x="1.700" y="1.700" width="21" height="21" fill="url(#gR)" stroke="#222" stroke-width="1.500"/>
<path d="M2.500 7.500h19.500M8 2.500v19.500" stroke="#f4f4f4" stroke-width="1" opacity=".7"/>
</svg>
<div class="a dd" style="left:568px;top:448.500px"></div>
<!-- callout -->
<svg class="a" style="left:583px;top:439px" width="27" height="25" viewBox="0 0 27 25"><path d="M4.500 1.800h17a2.500 2.500 0 0 1 2.500 2.500v9.400a2.500 2.500 0 0 1-2.500 2.500H13l-8.500 5.300 3-5.300H4.500A2.500 2.500 0 0 1 2 13.700V4.300A2.500 2.500 0 0 1 4.500 1.800z" fill="url(#gR)" stroke="#444" stroke-width="1.200" stroke-linejoin="round"/></svg>
<div class="a dd" style="left:618px;top:448.500px"></div>
<!-- star -->
<svg class="a" style="left:633px;top:438px" width="26" height="25" viewBox="0 0 26 25"><path d="M13 2l2.900 7.600 8.100.4-6.300 5.100 2.100 7.900L13 18.500 6.200 23l2.100-7.900L2 10l8.100-.4z" fill="#e8e8e8" stroke="#333" stroke-width="1.200" stroke-linejoin="round"/></svg>
<div class="a dd" style="left:668px;top:448.500px"></div>
<div class="a sep" style="left:685px;top:440px;height:22px"></div>
<svg class="a" style="left:709px;top:448px" width="10" height="8" viewBox="0 0 10 8"><path d="M1.200 1.300l2.800 2.700-2.800 2.700M5.400 1.300l2.800 2.700-2.800 2.700" fill="none" stroke="#1a1a1a" stroke-width="1.500"/></svg>

<div class="a st" id="s1" style="left:14px">Forme sélectionné(e)(s)</div>
<svg class="a" style="left:160px;top:476px" width="16" height="13" viewBox="0 0 16 13" shape-rendering="crispEdges"><rect x="4" y="1" width="1" height="3" fill="#1010d0"/><rect x="4" y="5" width="1" height="1" fill="#1010d0"/><rect x="4" y="7" width="1" height="3" fill="#1010d0"/><rect x="1" y="5" width="2" height="1" fill="#1010d0"/><rect x="6" y="5" width="3" height="1" fill="#1010d0"/><rect x="10" y="5" width="1" height="1" fill="#111"/><rect x="12" y="5" width="1" height="1" fill="#111"/><rect x="14" y="5" width="1" height="1" fill="#111"/><rect x="14" y="7" width="1" height="1" fill="#111"/><rect x="14" y="9" width="1" height="1" fill="#111"/><rect x="14" y="11" width="1" height="1" fill="#111"/><rect x="4" y="11" width="1" height="1" fill="#111"/><rect x="6" y="11" width="1" height="1" fill="#111"/><rect x="8" y="11" width="1" height="1" fill="#111"/><rect x="10" y="11" width="1" height="1" fill="#111"/><rect x="12" y="11" width="1" height="1" fill="#111"/></svg>
<div class="a st" id="s2" style="left:181.500px;letter-spacing:-.25px">7,20 / 2,70</div>
<svg class="a" style="left:364px;top:476px" width="16" height="13" viewBox="0 0 16 13" shape-rendering="crispEdges"><rect x="6" y="5" width="1" height="1" fill="#111"/><rect x="6" y="11" width="1" height="1" fill="#111"/><rect x="8" y="5" width="1" height="1" fill="#111"/><rect x="8" y="11" width="1" height="1" fill="#111"/><rect x="10" y="5" width="1" height="1" fill="#111"/><rect x="10" y="11" width="1" height="1" fill="#111"/><rect x="12" y="5" width="1" height="1" fill="#111"/><rect x="12" y="11" width="1" height="1" fill="#111"/><rect x="14" y="5" width="1" height="1" fill="#111"/><rect x="14" y="11" width="1" height="1" fill="#111"/><rect x="6" y="7" width="1" height="1" fill="#111"/><rect x="14" y="7" width="1" height="1" fill="#111"/><rect x="6" y="9" width="1" height="1" fill="#111"/><rect x="14" y="9" width="1" height="1" fill="#111"/><rect x="6" y="1" width="1" height="1" fill="#111"/><rect x="8" y="1" width="1" height="1" fill="#111"/><rect x="6" y="2" width="1" height="1" fill="#111"/><rect x="7" y="2" width="1" height="1" fill="#111"/><rect x="6" y="3" width="1" height="1" fill="#111"/><rect x="8" y="3" width="1" height="1" fill="#111"/><rect x="12" y="1" width="1" height="1" fill="#111"/><rect x="14" y="1" width="1" height="1" fill="#111"/><rect x="13" y="2" width="1" height="1" fill="#111"/><rect x="14" y="2" width="1" height="1" fill="#111"/><rect x="12" y="3" width="1" height="1" fill="#111"/><rect x="14" y="3" width="1" height="1" fill="#111"/><rect x="1" y="5" width="1" height="1" fill="#111"/><rect x="2" y="5" width="1" height="1" fill="#111"/><rect x="3" y="5" width="1" height="1" fill="#111"/><rect x="1" y="6" width="1" height="1" fill="#111"/><rect x="2" y="7" width="1" height="1" fill="#111"/><rect x="3" y="7" width="1" height="1" fill="#111"/><rect x="1" y="7" width="1" height="1" fill="#111"/><rect x="2" y="9" width="1" height="1" fill="#111"/><rect x="3" y="9" width="1" height="1" fill="#111"/><rect x="1" y="10" width="1" height="1" fill="#111"/><rect x="1" y="11" width="1" height="1" fill="#111"/><rect x="2" y="11" width="1" height="1" fill="#111"/><rect x="3" y="11" width="1" height="1" fill="#111"/></svg>
<div class="a st" id="s3" style="left:384.500px;letter-spacing:-.1px">4,70 x 3,70</div>
<svg class="a" style="left:572px;top:479px" width="13" height="12" viewBox="0 0 13 12"><path d="M8.500 2V.5h-8v10h8V9" fill="none" stroke="#808080" stroke-width="1"/><path d="M8.500 3v5.200M6.200 4.300l4.600 2.600M10.800 4.300L6.200 6.900" stroke="#c00808" stroke-width="1.200"/></svg>
<div class="a st" id="s4" style="left:627.500px">Diapo 1 / 1 (Mise</div>

<!-- window borders -->
<div class="a" style="left:0;top:0;width:1px;height:500px;background:#8c8c8c"></div>
<div class="a" style="left:1px;top:2px;width:2px;height:498px;background:#dcdcdc"></div>
<div class="a" style="left:726px;top:0;width:1px;height:500px;background:#8c8c8c"></div>
<div class="a" style="left:724px;top:2px;width:2px;height:498px;background:#dcdcdc"></div>
<div class="a" style="left:0;top:499px;width:727px;height:1px;background:#8f8f8f"></div>
</div>
</body></html>
